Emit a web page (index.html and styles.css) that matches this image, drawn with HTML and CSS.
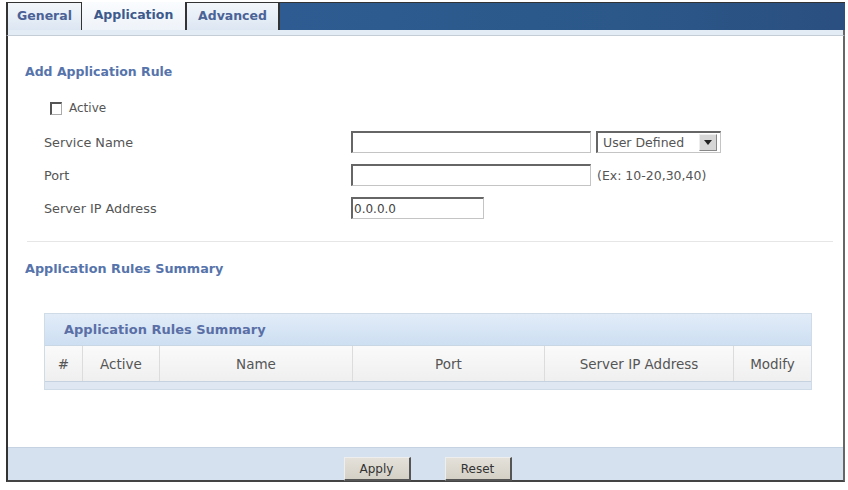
FILE: index.html
```html
<!DOCTYPE html>
<html>
<head>
    <meta charset="utf-8">
    <title>Application</title>
    <link rel="stylesheet" href="styles.css">
</head>
<body>
    <div class="frame">
        <div class="tabs">
            <div class="tab">General</div>
            <div class="tab current">Application</div>
            <div class="tab">Advanced</div>
            <div class="tab-fill"></div>
        </div>
        <div class="tab-strip"></div>

        <div class="panel">
            <div class="content">
                <h2>Add Application Rule</h2>

                <div class="check-row">
                    <label><input type="checkbox"> Active</label>
                </div>

                <div class="form-row">
                    <span class="label">Service Name</span>
                    <input type="text" class="wide">
                    <div class="select">
                        <span>User Defined</span>
                        <span class="select-arrow">
                            <svg width="8" height="5" viewBox="0 0 8 5"><path d="M0 0h8L4 5z" fill="#222"/></svg>
                        </span>
                    </div>
                </div>

                <div class="form-row">
                    <span class="label">Port</span>
                    <input type="text" class="wide">
                    <span class="hint">(Ex: 10-20,30,40)</span>
                </div>

                <div class="form-row">
                    <span class="label">Server IP Address</span>
                    <input type="text" class="short" value="0.0.0.0">
                </div>

                <hr>

                <h2 class="summary-title">Application Rules Summary</h2>

                <div class="summary">
                    <div class="summary-head">Application Rules Summary</div>
                    <table>
                        <tr>
                            <th class="c-num">#</th>
                            <th class="c-active">Active</th>
                            <th class="c-name">Name</th>
                            <th class="c-port">Port</th>
                            <th class="c-ip">Server IP Address</th>
                            <th class="c-mod">Modify</th>
                        </tr>
                    </table>
                    <div class="summary-foot"></div>
                </div>
            </div>

            <div class="buttons">
                <button>Apply</button>
                <button>Reset</button>
            </div>
        </div>
    </div>
</body>
</html>
```

FILE: styles.css
```css
body {
    margin: 0;
    background: #fff;
    font-family: "DejaVu Sans", Verdana, sans-serif;
    font-size: 12px;
    color: #4c4c4c;
}

.frame {
    margin: 2px 3px 0 6px;
}

/* tab bar */
.tabs {
    display: flex;
    height: 28px;
}

.tab {
    box-sizing: border-box;
    text-align: center;
    line-height: 26px;
    font-weight: bold;
    font-size: 12.5px;
    color: #4a6296;
    background: linear-gradient(#f2f6fb, #dce6f2);
    border: 1px solid #333;
    border-bottom: none;
}

.tab:first-child {
    width: 76px;
    border-left: 2px solid #333;
}

.tab.current {
    width: 104px;
    background: linear-gradient(#fafcfe, #eef3f9);
    color: #3d5a8c;
    border-top: none;
    border-left: none;
}

.tab:nth-child(3) {
    width: 94px;
    border-right: 2px solid #333;
}

.tab-fill {
    flex: 1;
    background: linear-gradient(90deg, #2e5c92, #2b5889 60%, #2a4f80);
    border-top: 1px solid #333;
}

.tab-strip {
    height: 5px;
    background: #e3ebf5;
    border-bottom: 1px solid #c4ccd6;
    border-left: 2px solid #333;
    border-right: 2px solid #666;
}

.panel {
    border-left: 2px solid #333;
    border-right: 2px solid #666;
    border-bottom: 2px solid #444;
}

.content {
    padding: 28px 0 0 17px;
    height: 383px;
}

h2 {
    margin: 0;
    font-size: 12.5px;
    font-weight: bold;
    color: #5674ab;
}

.check-row {
    margin: 22px 0 0 25px;
    height: 24px;
}

.check-row label {
    display: flex;
    align-items: center;
    gap: 7px;
    font-size: 12px;
    color: #555;
}

.check-row input {
    margin: 0;
    width: 12px;
    height: 13px;
    appearance: none;
    border: 1px solid #aaa;
    border-top: 2px solid #555;
    border-left: 2px solid #555;
    background: #fff;
}

.form-row {
    display: flex;
    align-items: center;
    height: 22px;
    margin: 6px 0 0 19px;
}

.form-row + .form-row {
    margin-top: 11px;
}

.label {
    width: 307px;
    font-size: 12.8px;
    color: #555;
}

input[type="text"] {
    box-sizing: border-box;
    height: 22px;
    margin: 0;
    padding: 0 1px;
    border: 1px solid #c4c4c4;
    border-top: 2px solid #666;
    border-left: 2px solid #666;
    font-family: inherit;
    font-size: 12px;
    color: #444;
}

.wide {
    width: 240px;
}

.short {
    width: 133px;
}

/* drop-down drawn as a classic sunken box with a grey arrow button */
.select {
    box-sizing: border-box;
    display: flex;
    align-items: center;
    justify-content: space-between;
    margin-left: 5px;
    width: 125px;
    height: 22px;
    padding: 0 3px 0 5px;
    border: 1px solid #c4c4c4;
    border-top: 2px solid #666;
    border-left: 2px solid #666;
    font-size: 12.5px;
    color: #555;
    background: #fff;
}

.select-arrow {
    display: flex;
    align-items: center;
    justify-content: center;
    width: 16px;
    height: 15px;
    background: #d6d6d6;
    border: 1px solid #eee;
    border-right-color: #888;
    border-bottom-color: #888;
}

.hint {
    margin-left: 6px;
    font-size: 12.5px;
    color: #555;
}

hr {
    margin: 22px 10px 0 2px;
    border: none;
    border-top: 1px solid #e6e6e6;
}

.summary-title {
    margin-top: 19px;
    font-size: 12.8px;
}

.summary {
    margin: 37px 0 0 19px;
    width: 766px;
    border: 1px solid #d0dbe8;
}

.summary-head {
    height: 31px;
    line-height: 31px;
    padding-left: 19px;
    font-size: 13px;
    font-weight: bold;
    color: #5a6fa6;
    background: linear-gradient(#e2ecf8, #cddff2);
    border-bottom: 1px solid #c9d6e4;
}

table {
    width: 100%;
    border-collapse: collapse;
}

th {
    height: 35px;
    padding: 0;
    font-weight: normal;
    font-size: 13.5px;
    color: #555;
    background: linear-gradient(#fafafa, #efefef);
    border-left: 1px solid #dcdcdc;
}

th:first-child {
    border-left: none;
}

.c-num { width: 37px; }
.c-active { width: 76px; }
.c-name { width: 192px; }
.c-port { width: 191px; }
.c-ip { width: 188px; }

.summary-foot {
    height: 7px;
    background: #dfe8f2;
    border-top: 1px solid #c6d2e0;
}

.buttons {
    display: flex;
    justify-content: center;
    gap: 34px;
    padding: 9px 0 0 4px;
    height: 23px;
    background: #d5e1ef;
    border-top: 1px solid #c5d2e2;
}

button {
    width: 67px;
    height: 24px;
    font-family: inherit;
    font-size: 12px;
    color: #333;
    background: linear-gradient(#e4e1da, #d4d0c6);
    border: 1px solid #999;
    border-right: 2px solid #555;
    border-bottom: 2px solid #555;
    border-top-color: #eee;
    border-left-color: #eee;
}
```
